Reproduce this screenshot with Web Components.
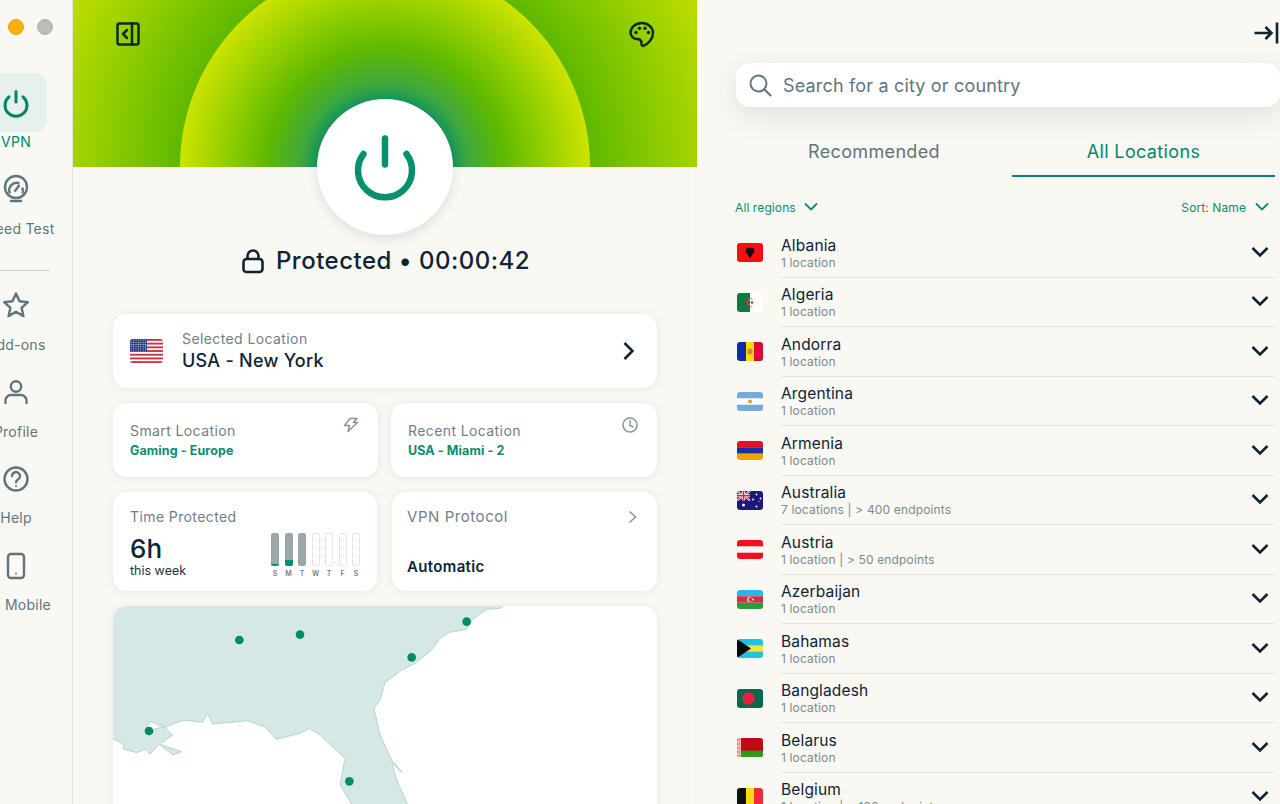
<!DOCTYPE html>
<html lang="en"><head><meta charset="utf-8"><title>VPN</title>
<style>
html,body{margin:0;height:100%;overflow:hidden;background:#f9f8f3;font-family:Inter,"Liberation Sans",sans-serif;color:#0d2436}
</style></head><body>
<vpn-app>
  <vpn-sidebar slot="side"></vpn-sidebar>
  <vpn-main slot="main"></vpn-main>
  <vpn-locations slot="right"></vpn-locations>
</vpn-app>
<script>
const ICONS={
 power:'<path d="M15 3.500v10.500" stroke-linecap="round"/><path d="M8 8.800a11 11 0 1 0 14 0" stroke-linecap="round"/>',
 speed:'<circle cx="15" cy="13" r="11"/><path d="M9 19.500a7.500 7.500 0 0 1 9.500-10.200M21.200 13.500a7.500 7.500 0 0 1 .2 6M13.500 17.500l5-6.500M9 27h12"/>',
 star:'<path stroke-linejoin="round" d="M15 3.500l3.500 7.800 8.400.9-6.300 5.600 1.800 8.300-7.400-4.300-7.400 4.300 1.800-8.300-6.300-5.600 8.400-.9z"/>',
 user:'<circle cx="15" cy="9.500" r="5.200"/><path stroke-linecap="round" d="M4.500 26v-2.500a5.500 5.500 0 0 1 5.500-5.500h10a5.500 5.500 0 0 1 5.500 5.500V26"/>',
 help:'<circle cx="15" cy="15" r="11.500"/><path stroke-linecap="round" d="M11 12a4 4 0 1 1 6.300 3.300c-1.300.8-2.300 1.500-2.300 3"/><circle cx="15" cy="22" r="1" fill="currentColor" stroke="none"/>',
 mobile:'<rect x="7" y="3" width="16" height="24" rx="3"/><circle cx="15" cy="22.500" r="1" fill="currentColor" stroke="none"/>'
};
function def(name,css,html){
  customElements.define(name,class extends HTMLElement{
    constructor(){super();this.attachShadow({mode:'open'})}
    connectedCallback(){
      const a=n=>this.getAttribute(n)||'';
      this.shadowRoot.innerHTML='<style>'+css+'</style>'+(typeof html==='function'?html(a):html);
    }
  });
}
def('vpn-app',':host{display:grid;grid-template-columns:73px 624px 583px;height:804px;overflow:hidden;background:#f9f8f3}',
 '<slot name="side"></slot><slot name="main"></slot><slot name="right"></slot>');

def('nav-item',`:host{display:flex;flex-direction:column;align-items:center;width:96px;margin-left:-32px;height:var(--h,86.5px);font-size:14px;color:#5f7580}
 .wrap{display:flex;height:59px;width:63px;margin-left:-1px;align-items:center;justify-content:center;border-radius:12px}
 svg{width:30px;height:30px;fill:none;stroke:currentColor;stroke-width:2.400;margin-left:1px}
 .txt{margin-top:0;line-height:20px;white-space:nowrap;letter-spacing:.25px;margin-left:var(--tx,0px)}
 :host([active]){color:#00876a}
 :host([active]) .wrap{background:#e6f0ec}
 :host([active]) svg{stroke-width:3}`,
 a=>`<div class="wrap"><svg viewBox="0 0 30 30" aria-hidden="true">${ICONS[a('icon')]}</svg></div><span class="txt">${a('label')}</span>`);

def('vpn-sidebar',`:host{display:block;width:72px;height:804px;border-right:1px solid #e2e2de;overflow:hidden;background:#f9f8f3}
 .lights{display:flex;gap:12.500px;padding:19px 0 0 8px;height:73px;box-sizing:border-box}
 .l{width:16px;height:16px;border-radius:50%;box-sizing:border-box}
 .o{background:#fdb00c;border:1px solid #e8a215}.g{background:#bdbcb9;border:1px solid #aeaeaa}
 hr{border:0;border-top:1px solid #cfd0cd;margin:0;width:50px;height:0}
 .div{height:16px;padding-top:10.500px;box-sizing:border-box}`,
 `<div class="lights"><div class="l o"></div><div class="l g"></div></div>
 <nav>
 <nav-item active icon="power" label="VPN"></nav-item>
 <nav-item icon="speed" label="Speed Test" style="--h:100px"></nav-item>
 <div class="div"><hr></div>
 <nav-item icon="star" label="Add-ons" style="--h:87px"></nav-item>
 <nav-item icon="user" label="Profile" style="--h:86.5px"></nav-item>
 <nav-item icon="help" label="Help" style="--h:87px"></nav-item>
 <nav-item icon="mobile" label="Mobile" style="--tx:24px"></nav-item>
 </nav>`);

def('vpn-hero',`:host{display:block;height:167px;position:relative;
 background:radial-gradient(circle at 312px 167px,#0c9462 64px,#3fa83c 84px,#5eb900 118px,#93cf00 160px,#cde300 204.500px,#5fb900 205.500px,#97cf00 290px,#c6e000 365px)}
 .tl,.tr{position:absolute;top:20px;width:28px;height:28px;fill:none;stroke:#0b2a22;stroke-width:2.500}
 .tl{left:41px}.tr{left:555px}
 .btn{position:absolute;left:244px;top:99px;width:136px;height:136px;border-radius:50%;background:#fff;box-shadow:0 4px 12px rgba(40,50,40,.12);z-index:2}
 .btn svg{position:absolute;left:36px;top:28px;width:64px;height:80px;fill:none;stroke:#078f6f;stroke-width:6.500;stroke-linecap:round}`,
 `<svg class="tl" viewBox="0 0 28 28" stroke-linejoin="round"><rect x="3.500" y="3.500" width="21" height="21" rx="2"/><path d="M18 3.500v21M13 10l-4 4 4 4" stroke-linecap="round"/></svg>
 <svg class="tr" viewBox="0 0 28 28"><path stroke-linejoin="round" d="M14 3C20 3 25 7.500 25 13C25 19 20 24 15.500 25.800C14 26.300 13.500 25 13.500 23.500C13.500 20 11.500 19 9 19C5.500 19 2.500 16 2.500 12.500C2.500 7.500 7.500 3 14 3z"/><g fill="#0b2a22" stroke="none"><circle cx="8" cy="12.500" r="1.700"/><circle cx="11.500" cy="8.200" r="1.700"/><circle cx="17" cy="8.200" r="1.700"/><circle cx="20.500" cy="12.500" r="1.700"/></g></svg>
 <div class="btn"><svg viewBox="0 0 64 80"><path d="M32 11.500v26"/><path d="M10.500 27A27 27 0 1 0 53.500 27"/></svg></div>`);

def('vpn-status',`:host{display:flex;align-items:center;justify-content:center;gap:11px;height:30px;margin-top:78px;font-size:24px;letter-spacing:.5px;font-weight:500;color:#0d2436;white-space:nowrap;padding-left:1px}
 svg{width:24px;height:26px;fill:none;stroke:#0d2436;stroke-width:2.600;margin-top:1px}`,
 `<svg viewBox="0 0 24 26"><rect x="2.500" y="11" width="19" height="13" rx="3"/><path d="M6.500 11V8a5.500 5.500 0 0 1 11 0v3"/></svg><span>Protected • 00:00:42</span>`);

def('vpn-card',`:host{display:block;background:#fff;border-radius:14px;box-shadow:0 1px 8px rgba(70,70,50,.10);position:relative;overflow:hidden}`,'<slot></slot>');

def('selected-card',`:host{display:block;height:74px}
 vpn-card{height:74px}
 .r{display:flex;align-items:center;height:74px;padding-left:17px;padding-right:20px;box-sizing:border-box}
 .t{margin-left:19px;flex:1;margin-top:-2px}
 .a{font-size:14px;line-height:20px;color:#6f7f87;letter-spacing:.4px}
 .b{font-size:18px;font-weight:500;line-height:23px;color:#0d2436;letter-spacing:.25px}
 .f{width:33px;height:24px;border-radius:3px;overflow:hidden;display:block}
 .c{width:16px;height:20px;fill:none;stroke:#0d2436;stroke-width:2.500}`,
 `<vpn-card><div class="r">
 <svg class="f" viewBox="0 0 33 24"><defs><pattern id="s" width="2.400" height="2.200" patternUnits="userSpaceOnUse"><circle cx="1.200" cy="1.100" r=".6" fill="#fff" opacity=".85"/></pattern></defs><rect width="33" height="24" fill="#fff"/><g fill="#d22f45"><rect y="0" width="33" height="1.850"/><rect y="3.700" width="33" height="1.850"/><rect y="7.400" width="33" height="1.850"/><rect y="11.100" width="33" height="1.850"/><rect y="14.800" width="33" height="1.850"/><rect y="18.500" width="33" height="1.850"/><rect y="22.150" width="33" height="1.850"/></g><rect width="17" height="13" fill="#2a3f7d"/><rect width="17" height="13" fill="url(#s)"/></svg>
 <div class="t"><div class="a">Selected Location</div><div class="b">USA - New York</div></div>
 <svg class="c" viewBox="0 0 16 20"><path d="M3.500 2l8 8-8 8"/></svg></div></vpn-card>`);

def('small-card',`:host{display:block;height:74px;flex:var(--f,1)}
 vpn-card{height:74px}
 .p{padding:18px 17px 0}
 .a{font-size:14px;line-height:20px;color:#6f7f87;letter-spacing:.4px}
 .b{font-size:12.500px;font-weight:700;line-height:18px;margin-top:1px;color:#0b8d6c;letter-spacing:.1px}
 svg{position:absolute;top:14px;right:19px;width:16px;height:16px;fill:none;stroke:#8a979d;stroke-width:1.500}`,
 a=>`<vpn-card><div class="p"><div class="a">${a('label')}</div><div class="b">${a('value')}</div></div>
 <svg viewBox="0 0 16 16">${a('icon')==='bolt'?'<path stroke-linejoin="round" d="M7 1.500h7L10.500 5.500H14.500L5 14.500l1.500-6H1.500z"/>':'<circle cx="8" cy="8" r="7"/><path d="M8 3.500V8.500l3 1.500" stroke-linecap="round"/>'}</svg></vpn-card>`);

def('time-card',`:host{display:block;height:99px;flex:0 0 264px}
 vpn-card{height:99px}
 .p{padding:15px 17px 0;position:relative}
 .a{font-size:14px;line-height:20px;color:#6f7f87;letter-spacing:.4px}
 .h{font-size:26px;font-weight:500;line-height:30px;margin-top:7px;color:#0d2436}
 .w{font-size:12.500px;line-height:15px;margin-top:-1px;color:#1e3442}
 .bars{position:absolute;left:158px;top:41px;display:grid;grid-template-columns:repeat(7,8px);column-gap:5.500px}
 .bar{height:33px;border-radius:2.500px;box-sizing:border-box;position:relative;overflow:hidden}
 .f{background:#9aa6aa}.e{border:1px dotted #c9cfd0}
 .bar i{position:absolute;left:0;right:0;bottom:0;background:#00906c;display:block}
 .d{font-size:7px;font-weight:600;color:#6f7f87;text-align:center;line-height:10px;margin-top:3px}`,
 `<vpn-card><div class="p"><div class="a">Time Protected</div><div class="h">6h</div><div class="w">this week</div>
 <div class="bars">
 <div class="bar f"><i style="height:2px"></i></div><div class="bar f"><i style="height:6px"></i></div><div class="bar f"></div><div class="bar e"></div><div class="bar e"></div><div class="bar e"></div><div class="bar e"></div>
 <div class="d">S</div><div class="d">M</div><div class="d">T</div><div class="d">W</div><div class="d">T</div><div class="d">F</div><div class="d">S</div>
 </div></div></vpn-card>`);

def('protocol-card',`:host{display:block;height:99px;flex:1}
 vpn-card{height:99px}
 .p{padding:15px 16px 0 15px}
 .a{font-size:15px;line-height:20px;color:#6f7f87;letter-spacing:.55px}
 .b{font-size:15px;font-weight:600;line-height:20px;margin-top:30px;color:#0d2436;letter-spacing:.35px}
 svg{position:absolute;top:18px;right:20px;width:9px;height:14px;fill:none;stroke:#8a979d;stroke-width:1.500}`,
 `<vpn-card><div class="p"><div class="a">VPN Protocol</div><div class="b">Automatic</div></div><svg viewBox="0 0 9 14"><path d="M1.500 1.500L7.500 7l-6 5.500"/></svg></vpn-card>`);

def('map-card',`:host{display:block;height:220px}
 vpn-card{height:220px}
 svg{display:block;width:544px;height:220px}`,
 `<vpn-card><svg viewBox="39 18 1632 660"><polygon fill="#d5e8e5" stroke="#b3d5cf" stroke-width="3" stroke-linejoin="round" points="30,10 1220,10 1200,25 1160,28 1115,60 1100,88 1048,97 1020,115 995,150 945,190 905,210 855,248 840,300 822,325 840,405 875,480 907,518 875,488 890,540 935,640 925,690 770,690 755,612 720,555 735,475 660,405 628,385 600,400 528,418 497,382 443,362 338,372 322,340 308,367 250,360 195,382 150,364 135,390 160,388 192,380 218,405 178,432 245,455 218,465 178,432 150,462 135,448 110,458 70,447 70,432 30,412"/>
 <g fill="#008c6a"><circle cx="418" cy="120" r="13"/><circle cx="600" cy="104" r="13"/><circle cx="935" cy="172" r="13"/><circle cx="1100" cy="65" r="13"/><circle cx="147" cy="393" r="13"/><circle cx="748" cy="544" r="13"/></g></svg></vpn-card>`);

def('vpn-main',`:host{display:block;height:804px;overflow:hidden;position:relative}
 .cards{display:flex;flex-direction:column;padding:39px 40px 0;gap:15px}
 .row{display:flex;gap:13px}.row2{gap:15px}`,
 `<vpn-hero></vpn-hero><vpn-status></vpn-status>
 <div class="cards"><selected-card></selected-card>
 <div class="row"><small-card style="--f:0 0 265px" label="Smart Location" value="Gaming - Europe" icon="bolt"></small-card><small-card label="Recent Location" value="USA - Miami - 2" icon="clock"></small-card></div>
 <div class="row row2"><time-card></time-card><protocol-card></protocol-card></div>
 <map-card></map-card></div>`);

const FLAGS={
 al:'<rect width="26" height="19" fill="#f40f10"/><path fill="#111" d="M13 4l1.500 1.500 2.500-.8-.5 3 1-.5-.5 3-1.500.5-.5 2L13 15l-2-2.300-.5-2-1.500-.5-.5-3 1 .5-.5-3 2.500.8z"/>',
 dz:'<rect width="26" height="19" fill="#fff"/><rect width="13" height="19" fill="#0a7a3e"/><circle cx="13" cy="9.500" r="4.200" fill="#d4213d"/><circle cx="14.200" cy="9.500" r="3.400" fill="#fff"/><path d="M13 6.320A3.400 3.400 0 0 0 13 12.680Z" fill="#0a7a3e"/><circle cx="15" cy="9.500" r="1.200" fill="#d4213d"/>',
 ad:'<rect width="9" height="19" fill="#0d2ea0"/><rect x="9" width="8" height="19" fill="#fedf00"/><rect x="17" width="9" height="19" fill="#d80a3e"/><rect x="10.500" y="6.500" width="5" height="6" rx="1.500" fill="#c7913b"/>',
 ar:'<rect width="26" height="19" fill="#75aadb"/><rect y="6.300" width="26" height="6.400" fill="#fff"/><circle cx="13" cy="9.500" r="2" fill="#e0a030"/>',
 am:'<rect width="26" height="6.400" fill="#e3101e"/><rect y="6.300" width="26" height="6.400" fill="#1c2ea3"/><rect y="12.700" width="26" height="6.300" fill="#f5a100"/>',
 au:'<rect width="26" height="19" fill="#1a1a7a"/><path stroke="#fff" stroke-width="2" d="M0 0l13 9.500M13 0L0 9.500"/><path stroke="#d8203a" stroke-width=".9" d="M0 0l13 9.500M13 0L0 9.500"/><path stroke="#fff" stroke-width="3.200" d="M6.500 0v9.500M0 4.750h13"/><path stroke="#d8203a" stroke-width="1.600" d="M6.500 0v9.500M0 4.750h13"/><g fill="#fff"><circle cx="6.500" cy="14" r="1.500"/><circle cx="19.500" cy="3.500" r=".9"/><circle cx="23.500" cy="7.500" r=".9"/><circle cx="16" cy="8.500" r=".9"/><circle cx="19.500" cy="15.500" r=".9"/><circle cx="22" cy="10.500" r=".5"/></g>',
 at:'<rect width="26" height="19" fill="#f40f1e"/><rect y="6.300" width="26" height="6.400" fill="#f9f8f3"/>',
 az:'<rect width="26" height="6.400" fill="#2cb5e6"/><rect y="6.300" width="26" height="6.400" fill="#dc2b3f"/><rect y="12.700" width="26" height="6.300" fill="#2c9c3a"/><circle cx="12.500" cy="9.500" r="2.400" fill="#fff"/><circle cx="13.300" cy="9.500" r="2" fill="#dc2b3f"/><circle cx="15.800" cy="9.500" r=".9" fill="#fff"/>',
 bs:'<rect width="26" height="19" fill="#1fc4d8"/><rect y="6.300" width="26" height="6.400" fill="#f7e23a"/><path d="M0 0l14 9.500L0 19z" fill="#0a0a0a"/>',
 bd:'<rect width="26" height="19" fill="#066a4e"/><circle cx="11.500" cy="9.500" r="6.200" fill="#e8203f"/>',
 by:'<rect width="26" height="19" fill="#c00c14"/><rect y="12.700" width="26" height="6.300" fill="#2a9a22"/><rect width="4" height="19" fill="#f2b8b8"/><path d="M0 2h4M0 6h4M0 10h4M0 14h4M0 18h4" stroke="#c73d3d" stroke-width="1" stroke-dasharray="1 1"/>',
 be:'<rect width="9" height="19" fill="#111"/><rect x="9" width="8" height="19" fill="#fcd816"/><rect x="17" width="9" height="19" fill="#ef2b35"/>'
};
def('flag-icon',`:host{display:block;width:26px;height:19px;border-radius:3px;overflow:hidden;flex:none}
 svg{display:block;width:26px;height:19px}`,a=>`<svg viewBox="0 0 26 19">${FLAGS[a('code')]}</svg>`);

def('location-row',`:host{display:flex;height:49.500px;align-items:stretch}
 flag-icon{margin:15px 18px 0 2px}
 .b{flex:1;border-bottom:1px solid #e3e3df;box-sizing:border-box;position:relative;padding-top:7.750px}
 .n{font-size:15.500px;line-height:19px;color:#0d2436;letter-spacing:.15px}
 .s{font-size:12px;line-height:15px;color:#7b8b92;letter-spacing:.15px}
 svg{position:absolute;right:6px;top:17.500px;width:18px;height:12px;fill:none;stroke:#0d2436;stroke-width:2.600}`,
 a=>`<flag-icon code="${a('code')}"></flag-icon><div class="b"><div class="n">${a('name')}</div><div class="s">${a('sub')}</div><svg viewBox="0 0 18 12"><path d="M1.500 2l7.500 7.500L16.500 2"/></svg></div>`);

def('vpn-locations',`:host{display:block;height:804px;overflow:hidden;position:relative;box-shadow:-1px 0 3px rgba(60,60,40,.04);background:#f9f8f3;z-index:3}
 .top{height:63px;display:flex;justify-content:flex-end;align-items:flex-start}
 .top svg{width:26px;height:24px;fill:none;stroke:#0d2436;stroke-width:2.600;margin:21px 1px 0 0}
 .search{margin-left:39px;height:44px;background:#fff;border-radius:14px;box-shadow:0 8px 28px rgba(60,60,40,.13);display:flex;align-items:center;padding-left:12px;font-size:18px;color:#5f7580;letter-spacing:.17px}
 .search svg{width:24px;height:24px;fill:none;stroke:#5f7580;stroke-width:2;margin-right:11px}
 .tabs{display:grid;grid-template-columns:276px 263px;margin:18px 0 0 39px;height:52px}
 .tab{display:flex;align-items:center;justify-content:center;font-size:18px;color:#5f7580;letter-spacing:.35px;height:52px;box-sizing:border-box;padding-top:2.500px;border-bottom:2.500px solid transparent}
 .on{color:#00876a;border-bottom-color:#00876a}
 .fil{display:flex;justify-content:space-between;align-items:center;margin:13px 0 0 38px;height:34px;font-size:12px;color:#0b8d6c;letter-spacing:.1px;padding-right:11px}
 .fil span{display:flex;align-items:center;gap:9px}
 .fil span:first-child{gap:8px}
 .fil svg{width:14px;height:10px;fill:none;stroke:#0b8d6c;stroke-width:1.800}
 .list{margin:4px 5px 0 38px}`,
 ()=>{
  const rows=[['al','Albania','1 location'],['dz','Algeria','1 location'],['ad','Andorra','1 location'],['ar','Argentina','1 location'],['am','Armenia','1 location'],['au','Australia','7 locations | > 400 endpoints'],['at','Austria','1 location | > 50 endpoints'],['az','Azerbaijan','1 location'],['bs','Bahamas','1 location'],['bd','Bangladesh','1 location'],['by','Belarus','1 location'],['be','Belgium','1 location | > 100 endpoints']];
  const chev='<svg viewBox="0 0 14 10"><path d="M1 1.500l6 6 6-6"/></svg>';
  return `<div class="top"><svg viewBox="0 0 26 24"><path d="M1.500 12h17M12.500 6l6 6-6 6M24 1.500v21"/></svg></div>
  <div class="search"><svg viewBox="0 0 24 24"><circle cx="10.500" cy="10.500" r="8"/><path d="M16.500 16.500l6 6" stroke-linecap="round"/></svg>Search for a city or country</div>
  <div class="tabs"><div class="tab">Recommended</div><div class="tab on">All Locations</div></div>
  <div class="fil"><span>All regions ${chev}</span><span>Sort: Name ${chev}</span></div>
  <div class="list">${rows.map(r=>`<location-row code="${r[0]}" name="${r[1]}" sub="${r[2].replace(/>/g,'&gt;')}"></location-row>`).join('')}</div>`;
 });
</script>
</body></html>
